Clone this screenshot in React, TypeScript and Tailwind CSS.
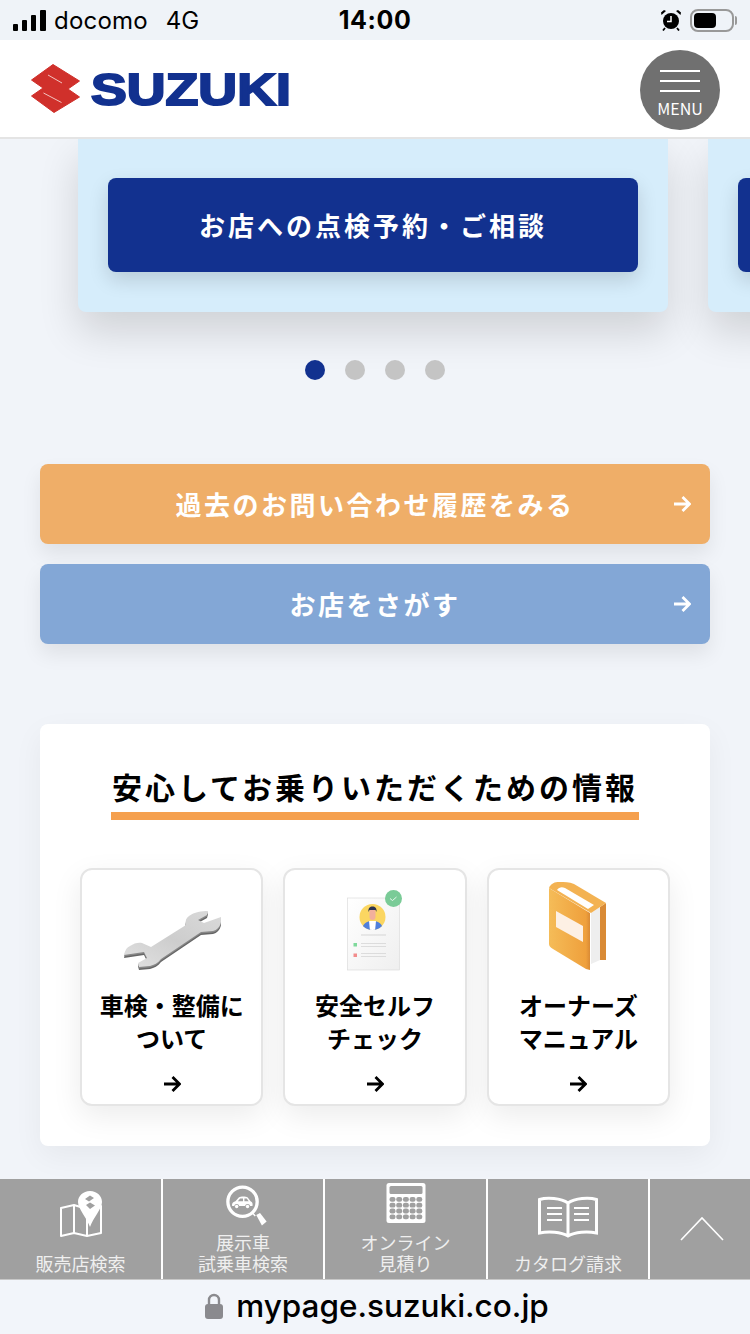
import type { ReactNode } from "react"

function ArrowIcon({ className }: { className: string }) {
  return (
    <svg viewBox="0 0 18 18" className={className} fill="none" stroke="currentColor" strokeWidth="2.800">
      <path d="M1 9h15M9.500 2l7 7-7 7" />
    </svg>
  )
}

function SuzukiLogo() {
  return (
    <div className="flex items-center gap-[9px]">
      <svg viewBox="30 63 52 52" className="h-[52px] w-[52px]">
        <path
          d="M31.500 80 53 64.500 79.500 81 68 89l11.500 8L54 112.500 31.500 96 43 88z"
          fill="#d0302b"
          stroke="#d0302b"
          strokeLinejoin="round"
        />
        <path d="M48 75l14 8M43.500 93l18 9.500" stroke="#f3c4c0" strokeWidth="1" />
      </svg>
      <span className="mt-[2px] origin-left scale-x-[1.22] font-['Liberation_Sans',sans-serif] text-[44px] leading-none font-bold text-[#12318f] [-webkit-text-stroke:2px_#12318f]">
        SUZUKI
      </span>
    </div>
  )
}

function StatusBar() {
  return (
    <div className="flex h-[40px] items-center bg-[#eff3f8] pr-[13px] pl-[13px] font-['Inter',sans-serif] text-black">
      <div className="flex flex-1 items-center">
        <div className="flex items-end gap-[4px]">
          <div className="h-[7px] w-[5px] rounded-[1px] bg-black" />
          <div className="h-[11px] w-[5px] rounded-[1px] bg-black" />
          <div className="h-[16px] w-[5px] rounded-[1px] bg-black" />
          <div className="h-[21px] w-[6px] rounded-[1px] bg-black" />
        </div>
        <span className="mt-[1px] ml-[8px] text-[24px] leading-none tracking-[0.2px]">docomo</span>
        <span className="mt-[1px] ml-[18px] text-[24px] leading-none">4G</span>
      </div>
      <span className="text-[25px] leading-none font-bold tracking-[0.600px]">14:00</span>
      <div className="flex flex-1 items-center justify-end">
        <svg viewBox="0 0 22 22" className="h-[22px] w-[22px]">
          <circle cx="11" cy="12" r="8" fill="#000" />
          <path d="M11 7v5.500H7" stroke="#fff" strokeWidth="1.500" fill="none" />
          <path d="M1.500 6 6 2 4 1 1 3.500zM20.500 6 16 2l2-1 3 2.500z" fill="#000" />
          <path d="M5 19l-2 2.500M17 19l2 2.500" stroke="#000" strokeWidth="1.800" />
        </svg>
        <div className="ml-[8px] flex h-[23px] w-[44px] items-center rounded-[8px] border-2 border-[#999999] pl-[2px]">
          <div className="h-[15px] w-[22px] rounded-[4px] bg-black" />
        </div>
        <div className="ml-[1px] h-[9px] w-[2px] rounded-r-[2px] bg-[#999999]" />
      </div>
    </div>
  )
}

function Header() {
  return (
    <header className="relative z-10 flex h-[99px] shrink-0 items-center justify-between border-b-2 border-[#e4e4e4] bg-white pr-[30px] pl-[30px]">
      <SuzukiLogo />
      <div className="mt-[2px] flex h-[80px] w-[80px] flex-col items-center rounded-full bg-[#707070] pt-[20px] text-white">
        <div className="h-[2px] w-[40px] bg-white" />
        <div className="mt-[8px] h-[2px] w-[40px] bg-white" />
        <div className="mt-[8px] h-[2px] w-[40px] bg-white" />
        <span className="mt-[6px] text-[16px] leading-[20px] font-normal">MENU</span>
      </div>
    </header>
  )
}

function Carousel() {
  const cards = ["お店への点検予約・ご相談", ""]
  return (
    <div className="flex gap-[40px] pl-[78px]">
      {cards.map((label, i) => (
        <div
          key={i}
          className="h-[173px] w-[590px] shrink-0 rounded-b-[8px] bg-[#d6edfb] pt-[39px] pl-[30px] shadow-[0_20px_40px_rgba(0,0,0,0.14)]"
        >
          <div className="flex h-[94px] w-[530px] items-center justify-center rounded-[8px] bg-[#12318f] pb-[2px] text-[26px] font-bold tracking-[3px] text-white shadow-[0_8px_20px_rgba(0,0,0,0.14)]">
            {label}
          </div>
        </div>
      ))}
    </div>
  )
}

function Dots() {
  return (
    <div className="mt-[48px] flex justify-center gap-[20px]">
      <div className="h-[20px] w-[20px] rounded-full bg-[#12318f]" />
      <div className="h-[20px] w-[20px] rounded-full bg-[#c4c4c4]" />
      <div className="h-[20px] w-[20px] rounded-full bg-[#c4c4c4]" />
      <div className="h-[20px] w-[20px] rounded-full bg-[#c4c4c4]" />
    </div>
  )
}

function LinkButton({ label, color }: { label: string; color: string }) {
  return (
    <div
      className={`relative flex h-[80px] items-center justify-center rounded-[8px] pb-[2px] text-[26px] font-bold tracking-[2.500px] text-white shadow-[0_10px_20px_rgba(0,0,0,0.08)] ${color}`}
    >
      {label}
      <ArrowIcon className="absolute top-[31px] right-[19px] h-[18px] w-[18px]" />
    </div>
  )
}

function WrenchImage() {
  const face =
    "M0 46C1 41 3 38 6 37 10 34 15 33 18 34L27 38 62 16C61 12 62 9 65 7 70 3 78 2 84 2L83 6 74 11 80 14 97 8 97 13C96 18 93 21 89 22L77 23 37 50C34 54 30 56 26 57L15 58 14 54 23 49 20 43 0 46z"
  return (
    <svg viewBox="0 0 100 62" className="mb-[4px] ml-[5px] h-[62px] w-[100px]">
      <defs>
        <linearGradient id="wrenchFace" x1="0" y1="1" x2="1" y2="0">
          <stop offset="0" stopColor="#e2e2e2" />
          <stop offset="0.5" stopColor="#cdcdcd" />
          <stop offset="1" stopColor="#dadada" />
        </linearGradient>
      </defs>
      <path d={face} fill="#666666" transform="translate(0 3)" />
      <path d={face} fill="#888888" transform="translate(0 1.500)" />
      <path d={face} fill="url(#wrenchFace)" />
    </svg>
  )
}

function ProfileImage() {
  return (
    <svg viewBox="0 0 70 90" className="h-[90px] w-[70px]">
      <defs>
        <linearGradient id="sheet" x1="0" y1="0" x2="1" y2="1">
          <stop offset="0" stopColor="#ffffff" />
          <stop offset="1" stopColor="#efefef" />
        </linearGradient>
        <clipPath id="avatar">
          <circle cx="32.500" cy="32" r="13" />
        </clipPath>
      </defs>
      <rect x="7.500" y="13" width="52" height="72" fill="url(#sheet)" stroke="#d8d8d8" strokeWidth="0.600" />
      <circle cx="32.500" cy="32" r="13" fill="#fbd661" />
      <g clipPath="url(#avatar)">
        <path d="M22 46c0-7 4-10 10.500-10S43 39 43 46z" fill="#4f7fdc" />
        <path d="M29 36h7l-1 10h-5z" fill="#ffffff" />
        <rect x="29.500" y="24" width="6" height="11" rx="3" fill="#f2b09c" />
        <path d="M28.500 27c-.500-4 1.500-5.500 4-5.500s4.500 1.500 4 5.500l-1-2h-6z" fill="#2c3350" />
      </g>
      <path d="M21 50h25" stroke="#d5d5d5" strokeWidth="1" />
      <path d="M21 58.500h25M21 61.500h25M21 68.500h25M21 71.500h25" stroke="#d5d5d5" strokeWidth="0.800" />
      <rect x="13.500" y="58" width="3.500" height="3.500" fill="#7fd99b" />
      <rect x="13.500" y="68.500" width="3.500" height="3.500" fill="#f28c8c" />
      <circle cx="53.500" cy="13.500" r="8.500" fill="#7acb97" />
      <path d="M50 13.500l2.500 2 4-3.500" stroke="#ffffff" strokeWidth="0.800" fill="none" />
    </svg>
  )
}

function BookImage() {
  return (
    <svg viewBox="0 0 65 92" className="mr-[2px] mb-[3px] h-[92px] w-[65px]">
      <defs>
        <linearGradient id="cover" x1="0" y1="0" x2="1" y2="0">
          <stop offset="0" stopColor="#f5bc58" />
          <stop offset="0.9" stopColor="#efa03c" />
          <stop offset="1" stopColor="#d98a35" />
        </linearGradient>
      </defs>
      <path d="M55 27 61 23V80H55z" fill="#d98a35" />
      <path d="M46 33 55 27V80L46 84z" fill="#eeeeee" />
      <path d="M4 8C6 3 10 2 14 2 20 2 24 2 29 4L61 23 46 33z" fill="#f3b252" />
      <path d="M12 10C14 7 17 6.500 20 8L49 25 43 29z" fill="#ffffff" />
      <path d="M4 8 45 33V90L41 89 8 69C5 67 4 66 4 64z" fill="url(#cover)" />
      <path d="M11 31 38 46V62L11 47z" fill="#fdf0e4" />
    </svg>
  )
}

function InfoTile({ image, lines }: { image: ReactNode; lines: string[] }) {
  return (
    <div className="flex h-[238px] flex-col items-center rounded-[12px] border-2 border-[#e5e5e5] bg-white shadow-[0_10px_30px_rgba(0,0,0,0.08)]">
      <div className="flex h-[105px] items-end justify-center">{image}</div>
      <div className="mt-[13px] text-center text-[24px] leading-[33px] font-bold text-black">
        {lines.map((line) => (
          <div key={line}>{line}</div>
        ))}
      </div>
      <ArrowIcon className="mt-[21px] h-[18px] w-[18px] text-black" />
    </div>
  )
}

function InfoCard() {
  return (
    <section className="mt-[80px] mr-[40px] ml-[40px] flex h-[422px] flex-col items-center rounded-[8px] bg-white pt-[40px] shadow-[0_10px_30px_rgba(0,0,0,0.05)]">
      <h2 className="border-b-8 border-[#f5a04e] pr-[1px] pb-[3px] pl-[1px] text-[30px] leading-[45px] font-bold tracking-[3px] text-black">
        安心してお乗りいただくための情報
      </h2>
      <div className="mt-[48px] grid w-[590px] grid-cols-3 gap-[20px]">
        <InfoTile image={<WrenchImage />} lines={["車検・整備に", "ついて"]} />
        <InfoTile image={<ProfileImage />} lines={["安全セルフ", "チェック"]} />
        <InfoTile image={<BookImage />} lines={["オーナーズ", "マニュアル"]} />
      </div>
    </section>
  )
}

function MapIcon() {
  return (
    <svg viewBox="0 0 60 60" className="mt-[6px] h-[60px] w-[60px]">
      <path
        d="M10 23 23 20 36 24 50 21V48L36 51 23 48 10 51z"
        fill="none"
        stroke="#ffffff"
        strokeWidth="2"
        strokeLinejoin="round"
      />
      <path d="M23 20V48M36 24V51" stroke="#ffffff" strokeWidth="2" />
      <path d="M39 6C46 6 51 11 51 17 51 24 42 33 39 42 36 33 27 24 27 17 27 11 32 6 39 6z" fill="#ffffff" />
      <path d="M34 14 39 10.500 43 13 38 16.500zM35 20 39 17.500 44 20.500 39 24z" fill="#a0a0a0" />
    </svg>
  )
}

function LoupeIcon() {
  return (
    <svg viewBox="0 0 60 55" className="mt-[1px] h-[55px] w-[60px]">
      <circle cx="29.500" cy="23" r="15.500" fill="none" stroke="#ffffff" strokeWidth="3.500" />
      <path d="M40 35 43 38" stroke="#ffffff" strokeWidth="1.500" />
      <path d="M44 37 48 35 55 44 50 48z" fill="#ffffff" />
      <path
        d="M18.500 27.500C18 25 19 23.500 22 22.500L25.500 18.500C27.500 17 33 17 35 18.500L38 22.500C40 23.500 40.500 25 40 27.500H37.500A2.700 2.700 0 0 0 32.200 27.500H26A2.700 2.700 0 0 0 20.700 27.500z"
        fill="#ffffff"
      />
      <path d="M24.500 22.500 27 19.500H30V22.500zM31.500 19.500H34L36 22.500H31.500z" fill="#a0a0a0" />
      <circle cx="23.300" cy="28" r="1.800" fill="#ffffff" />
      <circle cx="34.800" cy="28" r="1.800" fill="#ffffff" />
    </svg>
  )
}

function CalculatorIcon() {
  const rows = [0, 1, 2, 3]
  const cols = [0, 1, 2, 3, 4]
  return (
    <svg viewBox="0 0 40 40" className="mt-[4px] h-[40px] w-[40px]">
      <rect x="0.500" y="0" width="39" height="40" rx="2.500" fill="#ffffff" />
      <rect x="3.500" y="3" width="33" height="8" rx="1.500" fill="#a0a0a0" />
      {rows.map((r) =>
        cols.map((c) => (
          <rect key={`${r}-${c}`} x={3.500 + c * 6.700} y={14 + r * 5.800} width="6" height="4.800" rx="2.200" fill="#a0a0a0" />
        )),
      )}
    </svg>
  )
}

function OpenBookIcon() {
  return (
    <svg viewBox="0 0 62 42" className="mt-[17px] h-[42px] w-[62px]" fill="none" stroke="#ffffff">
      <path
        d="M31 7C24 2 10 1 2.500 3.500V37C12 35 24 36 31 40 38 36 50 35 59.500 37V3.500C52 1 38 2 31 7V40"
        strokeWidth="3"
      />
      <path d="M10 12H25M10 18H25M10 24H25M37 12H52M37 18H52M37 24H52" strokeWidth="2" />
    </svg>
  )
}

function NavItem({ icon, label, className }: { icon: ReactNode; label: string; className: string }) {
  return (
    <div className={`flex h-full flex-col items-center border-r-2 border-white pb-[5px] ${className}`}>
      {icon}
      <div className="mt-auto text-center text-[18px] leading-[21px] font-normal whitespace-pre-line text-[#efefef]">
        {label}
      </div>
    </div>
  )
}

function BottomNav() {
  return (
    <nav className="flex h-[101px] shrink-0 border-b border-[#c8c8c8] bg-[#a0a0a0]">
      <NavItem className="w-[163px]" icon={<MapIcon />} label="販売店検索" />
      <NavItem className="w-[162px]" icon={<LoupeIcon />} label={"展示車\n試乗車検索"} />
      <NavItem className="w-[163px]" icon={<CalculatorIcon />} label={"オンライン\n見積り"} />
      <NavItem className="w-[162px]" icon={<OpenBookIcon />} label="カタログ請求" />
      <div className="flex flex-1 items-start justify-center pt-[37px] pl-[3px]">
        <svg viewBox="0 0 44 25" className="h-[25px] w-[44px]" fill="none" stroke="#ffffff" strokeWidth="1.600">
          <path d="M1 24 22 2 43 24" />
        </svg>
      </div>
    </nav>
  )
}

function UrlBar() {
  return (
    <div className="flex h-[54px] shrink-0 items-center justify-center gap-[13px] bg-[#f2f5fa] pb-[3px] pl-[4px] font-['Inter',sans-serif] text-black">
      <svg viewBox="0 0 18 26" className="h-[26px] w-[18px]">
        <path d="M4 12V7a5 5 0 0 1 10 0v5" fill="none" stroke="#8a8a8e" strokeWidth="2.400" />
        <rect x="0" y="11" width="18" height="15" rx="3" fill="#8a8a8e" />
      </svg>
      <span className="text-[31.500px] leading-none font-medium">mypage.suzuki.co.jp</span>
    </div>
  )
}

export default function App() {
  return (
    <div className="flex h-[1334px] w-[750px] flex-col overflow-hidden bg-[#f1f4f9] font-['Noto_Sans_CJK_JP',sans-serif]">
      <StatusBar />
      <Header />
      <main className="min-h-0 flex-1 overflow-hidden">
        <Carousel />
        <Dots />
        <div className="mt-[84px] flex flex-col gap-[20px] pr-[40px] pl-[40px]">
          <LinkButton label="過去のお問い合わせ履歴をみる" color="bg-[#efae68]" />
          <LinkButton label="お店をさがす" color="bg-[#83a7d6]" />
        </div>
        <InfoCard />
      </main>
      <BottomNav />
      <UrlBar />
    </div>
  )
}
